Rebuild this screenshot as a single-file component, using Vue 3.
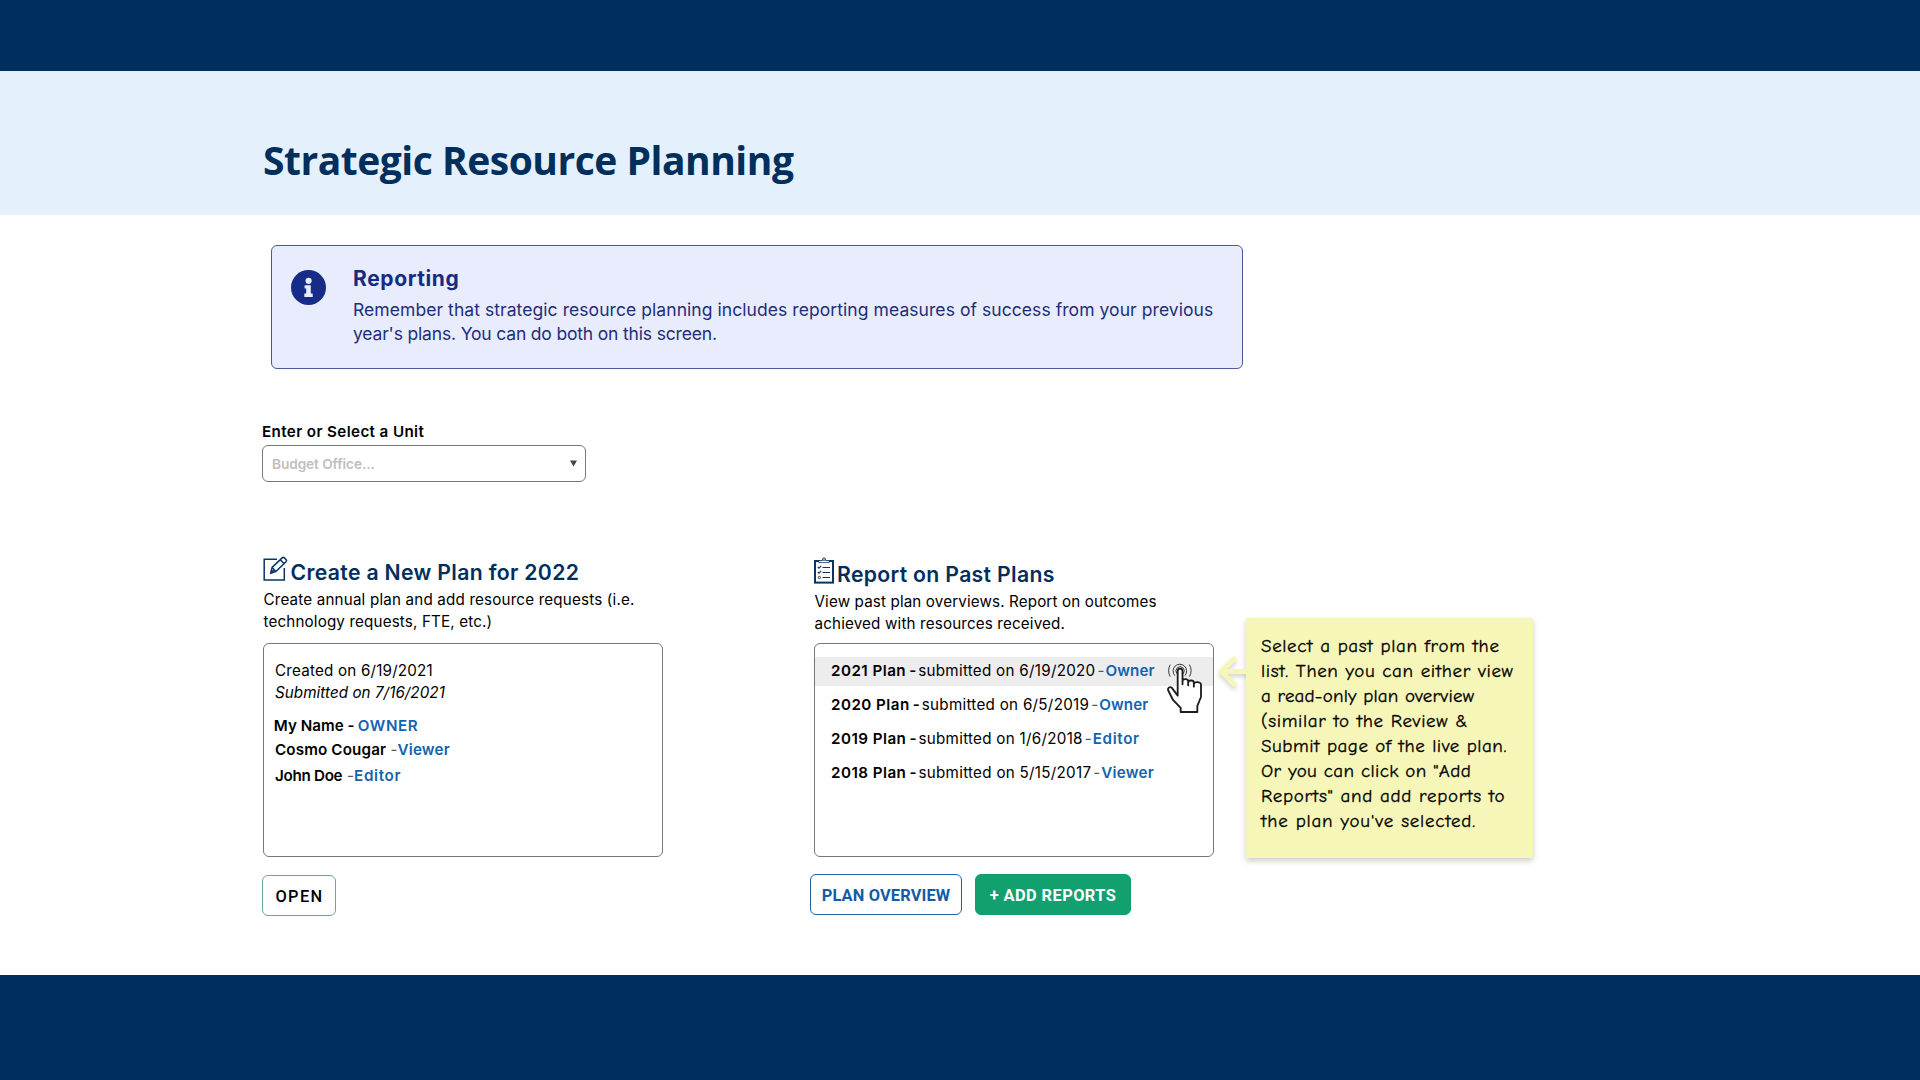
<script setup>
const members = [
  { name: 'My Name -', role: 'OWNER', key: 'me' },
  { name: 'Cosmo Cougar', role: 'Viewer', key: 'cosmo' },
  { name: 'John Doe', role: 'Editor', key: 'john' },
]

const plans = [
  { title: '2021 Plan', date: 'submitted on 6/19/2020', role: 'Owner', selected: true },
  { title: '2020 Plan', date: 'submitted on 6/5/2019', role: 'Owner' },
  { title: '2019 Plan', date: 'submitted on 1/6/2018', role: 'Editor' },
  { title: '2018 Plan', date: 'submitted on 5/15/2017', role: 'Viewer' },
]

const note = [
  { text: 'Select a past plan from the', tracking: 0.65 },
  { text: 'list. Then you can either view', tracking: 0.63 },
  { text: 'a read-only plan overview', tracking: 0.19 },
  { text: '(similar to the Review &', tracking: 0.64 },
  { text: 'Submit page of the live plan.', tracking: 0.53 },
  { text: 'Or you can click on "Add', tracking: 0.34 },
  { text: 'Reports" and add reports to', tracking: 0.7 },
  { text: "the plan you've selected.", tracking: 0.79 },
]
</script>

<template>
  <div class="page">
    <div class="topbar"></div>
    <header class="band"><h1>Strategic Resource Planning</h1></header>

    <main>
      <section class="info">
        <svg class="info-icon" viewBox="0 0 35 35">
          <circle cx="17.5" cy="17.5" r="17.5" fill="#172b88" />
          <circle cx="17.6" cy="10.8" r="3.1" fill="#e8ecfc" />
          <path d="M13.6 15.3h6.2v8.3h1.9v3.3h-8.4v-3.3h1.9v-5h-1.6z" fill="#e8ecfc" />
        </svg>
        <div>
          <h2>Reporting</h2>
          <p class="i1">Remember that strategic resource planning includes reporting measures of success from your previous</p>
          <p class="i2">year's plans. You can do both on this screen.</p>
        </div>
      </section>

      <label class="unit-label">Enter or Select a Unit</label>
      <div class="select">
        <span>Budget Office...</span>
        <svg width="7" height="7" viewBox="0 0 8 7"><path d="M0 0h8L4 7z" fill="#444" /></svg>
      </div>

      <div class="columns">
        <section class="col">
          <div class="head">
            <div class="title-row">
              <svg class="edit" width="25" height="26" viewBox="0 0 25 26" fill="none" stroke="#0b3460" stroke-width="1.5">
                <path d="M14 3.2H1.2V24H21.3V12" />
                <path d="M7.6 17.2l1.5-5.8L19.2 1.9a1.6 1.6 0 0 1 2.2 0l1.6 1.6a1.6 1.6 0 0 1 0 2.2L12.9 15.5zM17.3 3.7l3.9 4M9.1 11.4l3.8 4.1M7.6 17.2l3.4-3.4" stroke-linejoin="round" />
              </svg>
              <h3>Create a New Plan for 2022</h3>
            </div>
            <p class="c1">Create annual plan and add resource requests (i.e.</p>
            <p class="c2">technology requests, FTE, etc.)</p>
          </div>
          <div class="card plan-card">
            <p class="created">Created on 6/19/2021</p>
            <p class="submitted">Submitted on 7/16/2021</p>
            <div class="members">
              <div v-for="m in members" :key="m.key" class="member" :class="m.key">
                <b>{{ m.name }}</b><i v-if="m.key !== 'me'">-</i><a>{{ m.role }}</a>
              </div>
            </div>
          </div>
          <div class="actions"><button class="open">OPEN</button></div>
        </section>

        <section class="col report">
          <div class="head">
            <div class="title-row">
              <svg class="clip" width="20" height="27" viewBox="0 0 20 27" fill="none" stroke="#0b3460">
                <rect x="1" y="4" width="18" height="21.6" stroke-width="2" />
                <path d="M4.800 5.600V3.600h3.400a1.800 1.800 0 0 1 3.600 0h3.400v2z" fill="#fff" stroke-width=".8" />
                <circle cx="10" cy="2.200" r="1.500" stroke-width=".6" />
                <path d="M8.500 10.500h7.500M8.500 15.500h7.500M8.500 20.500h7.500" stroke-width="1.200" />
                <path d="M3.800 10l1.200 1.200 2.200-2.400M3.800 15l1.200 1.200 2.200-2.400" stroke-width="1.100" />
                <circle cx="5.400" cy="20.500" r="1.200" stroke-width=".9" />
              </svg>
              <h3>Report on Past Plans</h3>
            </div>
            <p class="r1">View past plan overviews. Report on outcomes</p>
            <p class="r2">achieved with resources received.</p>
          </div>
          <div class="card list">
            <div v-for="p in plans" :key="p.title" class="row" :class="{ selected: p.selected }">
              <b>{{ p.title }}</b><b class="dash">-</b><span>{{ p.date }}</span><i>-</i><a :class="p.role">{{ p.role }}</a>
            </div>
            <svg class="hand" viewBox="80 64 110 157" fill="none" stroke="#1c1c1c" stroke-linecap="round" stroke-linejoin="round">
              <path d="M105.500 107a20.500 20.500 0 1 1 32 0M112.500 101.500a12.500 12.500 0 1 1 19.500 0" stroke-width="2.600" />
              <path d="M92 76q-9 17 0 34M151 76q9 17 0 34" stroke-width="2.600" />
              <path d="M115 168V95a7.200 8 0 0 1 14.500 0V134V125a8.500 6.500 0 0 1 17 0V137V129a8.500 6.500 0 0 1 17 0V141V134a8.500 6 0 0 1 21.500 2V172L174 199V217H124V205L101 181L86 151a7 7 0 0 1 11-7z" fill="#fff" stroke-width="5.500" />
            </svg>
          </div>
          <div class="actions">
            <button class="overview">PLAN OVERVIEW</button>
            <button class="add">+ ADD REPORTS</button>
          </div>
        </section>

        <aside class="note">
          <svg class="arrow" width="32" height="36" viewBox="0 0 32 36" fill="none" stroke="#f7f6b9" stroke-width="5.200" stroke-linecap="round" stroke-linejoin="round">
            <path d="M34 17.500H5M18 5L5 17.500l13 12.500" />
          </svg>
          <p v-for="l in note" :key="l.text" :style="{ letterSpacing: l.tracking + 'px' }">{{ l.text }}</p>
        </aside>
      </div>
    </main>
    <footer></footer>
  </div>
</template>

<style>
body { margin: 0; background: #fff; }
</style>

<style scoped>
.page { width: 1920px; height: 1080px; display: flex; flex-direction: column; overflow: hidden; background: #fff; font-family: Inter, "Liberation Sans", sans-serif; color: #000; }
h1, h2, h3, p { margin: 0; white-space: nowrap; }
.topbar { height: 71px; background: #002e5d; flex: none; }
.band { height: 144px; background: #e4f1fd; flex: none; padding-left: 263px; box-sizing: border-box; }
h1 { font: 700 39px/50px "Open Sans", sans-serif; letter-spacing: -.48px; color: #002e5d; padding-top: 64px; }
main { flex: none; height: 760px; padding-left: 262px; box-sizing: border-box; }
footer { flex: 1; background: #002e5d; }

.info { display: flex; box-sizing: border-box; margin: 30px 0 0 9px; width: 972px; height: 124px; border: 1px solid #4a5a96; border-radius: 6px; background: #e8ecfc; padding: 0 0 0 19px; color: #1d2e7d; }
.info-icon { width: 35px; height: 35px; margin: 24px 27px 0 0; flex: none; }
h2 { font-weight: 700; font-size: 21px; line-height: 28px; letter-spacing: .62px; margin-top: 19px; color: #172b83; }
.info p { font-size: 17.5px; line-height: 24px; }
.i1 { letter-spacing: .066px; margin-top: 5px; }
.i2 { letter-spacing: -.17px; }

.unit-label { display: block; margin-top: 53px; font-weight: 600; font-size: 15.2px; line-height: 20px; letter-spacing: .38px; height: 20px; }
.select { display: flex; align-items: center; justify-content: space-between; box-sizing: border-box; width: 324px; height: 37px; margin-top: 3px; padding: 0 8px 0 9px; border: 1px solid #777; border-radius: 6px; }
.select span { font-weight: 600; font-size: 13.7px; letter-spacing: -.1px; color: #c4bdbd; }

.columns { display: flex; margin: 68px 0 0 1px; }
.col { width: 400px; flex: none; }
.report { margin-left: 151px; }
.head { height: 93px; box-sizing: border-box; padding-top: 8px; }
.report .head { padding-top: 10px; }
.title-row { display: flex; height: 28px; margin-bottom: 2.500px; }
h3 { font-weight: 600; font-size: 21.2px; line-height: 28px; letter-spacing: .33px; color: #002e5d; }
.edit { flex: none; margin: -2px 3px 0 -.5px; }
.clip { flex: none; margin: -3.500px 3.500px 0 -.5px; }
.head p, .plan-card p { font-size: 15.2px; line-height: 22px; }
.head p { padding-left: .5px; }
.c1 { letter-spacing: .175px; }
.c2 { letter-spacing: .15px; }
.r1 { letter-spacing: .13px; }
.r2 { letter-spacing: .155px; }
.card { position: relative; box-sizing: border-box; width: 400px; height: 214px; border: 1px solid #777; border-radius: 6px; font-size: 15.2px; }
.plan-card { padding: 16px 0 0 11px; }
.created { letter-spacing: .2px; }
.submitted { font-style: italic; letter-spacing: .06px; }
.members { padding-top: 11px; }
.member { display: flex; line-height: 22px; height: 24px; }
.member.cosmo { height: 26px; }
.member.me { margin-left: -1.200px; }
b { font-weight: 600; }
i { font-style: normal; color: #555; }
a { color: #1463b0; font-weight: 600; }
.me b { width: 84px; letter-spacing: 0; }
.me a { letter-spacing: .59px; }
.cosmo b { width: 115.500px; letter-spacing: .14px; }
.cosmo i, .john i { width: 7px; }
.cosmo a { letter-spacing: .2px; }
.john b { width: 72px; letter-spacing: -.3px; }
.john a { letter-spacing: .68px; }

.list { display: flex; flex-direction: column; gap: 5px; padding-top: 13px; }
.row { display: flex; height: 29px; line-height: 28px; padding-left: 16px; white-space: nowrap; flex: none; }
.row.selected { background: #ededed; }
.row b { letter-spacing: .46px; }
.row .dash { margin: 0 2px 0 3px; letter-spacing: 0; }
.row span { letter-spacing: .28px; }
.row i { margin: 0 1px 0 2px; }
.row .Owner { letter-spacing: .08px; }
.row .Editor { letter-spacing: .65px; }
.row .Viewer { letter-spacing: .25px; }
.hand { position: absolute; left: 351.200px; top: 17.300px; width: 36.700px; height: 52.300px; }

.actions { display: flex; gap: 13px; margin: 17px 0 0 -4px; }
.col:first-child .actions { margin: 18px 0 0 -1px; }
button { box-sizing: border-box; height: 41px; padding: 1px 0 0; border-radius: 6px; background: #fff; font: 700 16.4px/39px Roboto, sans-serif; text-align: center; }
.open { width: 74px; border: 1px solid #6aa5a3; color: #000; font-weight: 500; letter-spacing: 1.4px; padding-left: 1px; }
.overview { width: 152px; border: 1px solid #1b62ab; color: #125ba6; letter-spacing: .14px; }
.add { width: 156px; border: 1px solid #12a06e; background: #12a06e; color: #fff; letter-spacing: .41px; }

.note { position: relative; box-sizing: border-box; width: 287px; height: 240px; margin: 68px 0 0 32px; padding: 15.500px 0 0 15px; background: #f7f6b9; box-shadow: 0 3px 6px rgba(0, 0, 0, .2); flex: none; }
.note p { font: 400 19px/25px "Comic Neue", "Comic Sans MS", Lato, sans-serif; color: #000; -webkit-text-stroke: .3px #000; }
.arrow { position: absolute; left: -30px; top: 36px; filter: drop-shadow(0 3px 2px rgba(0, 0, 0, .16)); clip-path: inset(0 2px -6px -6px); }
</style>
